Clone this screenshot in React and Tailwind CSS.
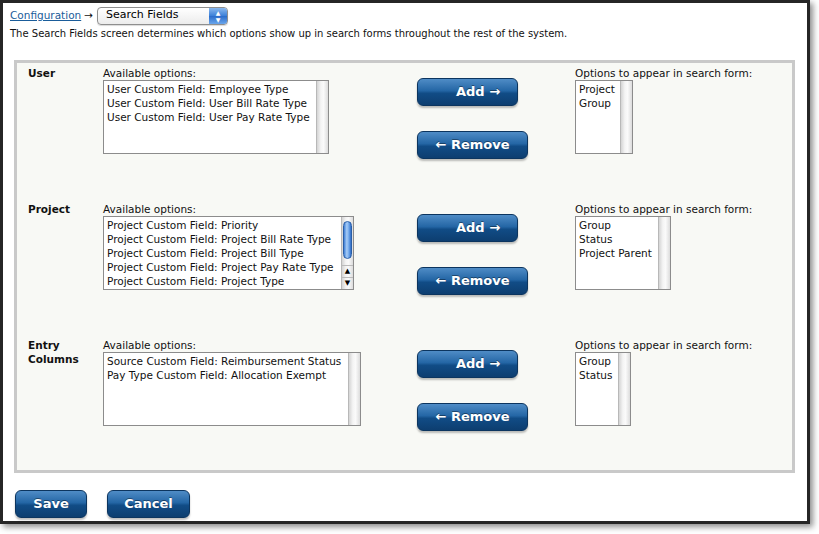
import React from "react";

const sections = [
  {
    label: ["User"],
    available: [
      "User Custom Field: Employee Type",
      "User Custom Field: User Bill Rate Type",
      "User Custom Field: User Pay Rate Type",
    ],
    leftWidth: "w-[226px]",
    chosen: ["Project", "Group"],
    rightWidth: "w-[58px]",
    thumb: false,
  },
  {
    label: ["Project"],
    available: [
      "Project Custom Field: Priority",
      "Project Custom Field: Project Bill Rate Type",
      "Project Custom Field: Project Bill Type",
      "Project Custom Field: Project Pay Rate Type",
      "Project Custom Field: Project Type",
    ],
    leftWidth: "w-[251px]",
    chosen: ["Group", "Status", "Project Parent"],
    rightWidth: "w-[96px]",
    thumb: true,
  },
  {
    label: ["Entry", "Columns"],
    available: [
      "Source Custom Field: Reimbursement Status",
      "Pay Type Custom Field: Allocation Exempt",
    ],
    leftWidth: "w-[258px]",
    chosen: ["Group", "Status"],
    rightWidth: "w-[56px]",
    thumb: false,
  },
];

function Track() {
  return (
    <div className="w-[12px] h-full border-l border-[#b8b8b8] bg-[linear-gradient(to_right,#d4d4d4,#f4f4f4_35%,#fafafa_60%,#dcdcdc)]" />
  );
}

function ThumbTrack() {
  return (
    <div className="w-[12px] h-full flex flex-col border-l border-[#b8b8b8] bg-[linear-gradient(to_right,#d4d4d4,#f4f4f4_35%,#fafafa_60%,#dcdcdc)]">
      <div className="mx-[1px] mt-[4px] h-[38px] rounded-full border border-[#2a5fa8] bg-[linear-gradient(to_right,#3f7fd6,#a8cdf7_40%,#6fa6ea_70%,#2f6cc4)]" />
      <div className="flex-1" />
      <div className="h-[12px] border-t border-[#bbb] flex items-center justify-center text-[7px] leading-none text-black">▲</div>
      <div className="h-[12px] border-t border-[#bbb] flex items-center justify-center text-[7px] leading-none text-black">▼</div>
    </div>
  );
}

function ListBox({ items, width, thumb }) {
  return (
    <div className={`${width} h-[74px] border border-[#8c8c8c] bg-white flex`}>
      <div className="flex-1 pl-[3px] pt-[1px] overflow-hidden whitespace-nowrap leading-[14px]">
        {items.map((t) => (
          <div key={t}>{t}</div>
        ))}
      </div>
      {thumb ? <ThumbTrack /> : <Track />}
    </div>
  );
}

function BlueButton({ children, className }) {
  return (
    <div
      className={`h-[28px] rounded-[6px] border border-[#0c355f] bg-[linear-gradient(to_bottom,#4f8cc6,#2466a5_45%,#114c86_55%,#0d3e70)] shadow-[0_2px_2px_rgba(0,0,0,0.25)] text-white font-bold text-[13px] flex items-center [text-shadow:0_-1px_0_rgba(0,0,0,0.4)] ${className}`}
    >
      {children}
    </div>
  );
}

export default function App() {
  return (
    <div className="w-[819px] h-[534px] bg-white font-['Verdana','DejaVu_Sans',sans-serif] text-[10.5px] text-[#111]">
      <div className="w-[810px] h-[524px] border-[3px] border-[#262626] bg-white shadow-[3px_3px_6px_rgba(0,0,0,0.45)] pl-[7px] pr-[12px]">
        {/* breadcrumb */}
        <div className="flex items-center h-[19px] mt-[3px]">
          <span className="text-[#1a5c9a] underline">Configuration</span>
          <span className="ml-[3px] mr-[4px]">→</span>
          <div className="w-[131px] h-[18px] rounded-[4px] border border-[#8e8e8e] bg-[linear-gradient(to_bottom,#ffffff,#ececec)] flex items-center shadow-[0_1px_1px_rgba(0,0,0,0.15)] font-['Lucida_Grande','DejaVu_Sans',sans-serif]">
            <span className="flex-1 pl-[8px] text-[11px] text-black">Search Fields</span>
            <div className="w-[18px] h-full rounded-r-[3px] bg-[linear-gradient(to_bottom,#8ab8ee,#3a7fd8_50%,#2a6ccb_51%,#6aa6ec)] flex flex-col items-center justify-center text-white text-[6px] leading-[7px]">
              <span>▲</span>
              <span>▼</span>
            </div>
          </div>
        </div>
        <p className="mt-[2px] leading-[14px] text-[10px]">
          The Search Fields screen determines which options show up in search forms throughout the rest of the system.
        </p>

        {/* panel */}
        <div className="mt-[19px] ml-[4px] w-[781px] h-[413px] border-[3px] border-[#c9c9c9] bg-[#f8f9f5] pt-[3px] pl-[11px]">
          {sections.map((s, i) => (
            <div key={i} className="flex h-[136px]">
              <div className="w-[75px] font-bold leading-[14px]">
                {s.label.map((l) => (
                  <div key={l}>{l}</div>
                ))}
              </div>
              <div className="w-[314px]">
                <div className="leading-[14px]">Available options:</div>
                <ListBox items={s.available} width={s.leftWidth} thumb={s.thumb} />
              </div>
              <div className="w-[158px] pt-[12px] flex flex-col gap-[25px]">
                <BlueButton className="w-[101px] pl-[38px]">Add →</BlueButton>
                <BlueButton className="w-[111px] justify-center">← Remove</BlueButton>
              </div>
              <div>
                <div className="leading-[14px]">Options to appear in search form:</div>
                <ListBox items={s.chosen} width={s.rightWidth} thumb={false} />
              </div>
            </div>
          ))}
        </div>

        {/* footer */}
        <div className="flex gap-[20px] mt-[17px] ml-[5px]">
          <BlueButton className="w-[72px] justify-center">Save</BlueButton>
          <BlueButton className="w-[83px] justify-center">Cancel</BlueButton>
        </div>
      </div>
    </div>
  );
}
